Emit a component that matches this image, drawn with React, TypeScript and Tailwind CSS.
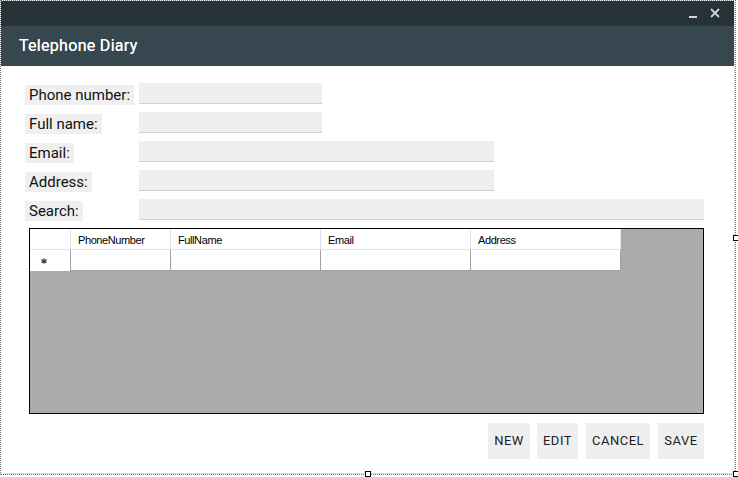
import React from "react";

const fields = [
  { label: "Phone number:", input: "w-[183px]" },
  { label: "Full name:", input: "w-[183px]" },
  { label: "Email:", input: "w-[355px]" },
  { label: "Address:", input: "w-[355px]" },
  { label: "Search:", input: "w-[565px]" },
];

const columns = [
  { name: "PhoneNumber", w: "w-[100px]" },
  { name: "FullName", w: "w-[150px]" },
  { name: "Email", w: "w-[150px]" },
  { name: "Address", w: "w-[150px]" },
];

const Handle = ({ className }: { className: string }) => (
  <div className={`absolute w-[6px] h-[6px] bg-white border border-black ${className}`} />
);

export default function App() {
  return (
    <div className="relative w-[738px] h-[477px] bg-white overflow-hidden font-['Roboto',sans-serif]">
      <div className="w-[736px] h-[475px] border border-dotted border-[#777]">
        <div className="flex flex-col h-full border-r border-b border-[#dcdcdc]">
          <div className="h-[25px] bg-[#263238] flex items-center justify-end pr-[14px] gap-[13px] text-[#cfd4d6]">
            <div className="w-[8px] h-[2px] bg-[#cfd4d6] mt-[6px]" />
            <svg width="10" height="10" viewBox="0 0 10 10" className="mt-[-1px]">
              <path d="M1 1L9 9M9 1L1 9" stroke="#cfd4d6" strokeWidth="1.8" />
            </svg>
          </div>
          <div className="h-[40px] bg-[#37474f] flex items-center pl-[18px]">
            <span className="text-white text-[16px] font-normal tracking-[0.3px] [text-shadow:0_0_0.5px_#fff]">
              Telephone Diary
            </span>
          </div>

          <div className="flex flex-col px-[24px] pt-[17px]">
            <div className="flex flex-col gap-[8px]">
              {fields.map((f) => (
                <div key={f.label} className="flex items-start h-[21px]">
                  <div className="w-[114px]">
                    <span className="inline-block h-[20px] leading-[20px] bg-[#efefef] px-[4px] text-[15px] text-[#111]">
                      {f.label}
                    </span>
                  </div>
                  <div className={`${f.input} h-[21px] bg-[#efefef] border-b border-[#d0d0d0]`} />
                </div>
              ))}
            </div>

            <div className="ml-[4px] mt-[8px] w-[675px] h-[186px] border border-black bg-[#ababab] font-['Liberation_Sans',sans-serif] text-[11px] text-black">
              <div className="flex">
                <div className="w-[41px] h-[21px] bg-white border-r border-b border-[#e2e2e2]" />
                {columns.map((c) => (
                  <div
                    key={c.name}
                    className={`${c.w} h-[21px] bg-white border-r border-b border-[#e2e2e2] pl-[7px] leading-[22px] tracking-[-0.4px]`}
                  >
                    {c.name}
                  </div>
                ))}
              </div>
              <div className="flex">
                <div className="w-[41px] h-[21px] bg-white border-r border-[#a0a0a0] flex items-center pl-[11px]">
                  <svg width="6" height="6" viewBox="0 0 6 6">
                    <path d="M3 0.2V5.8M0.4 1.6L5.6 4.4M5.6 1.6L0.4 4.4" stroke="#444" strokeWidth="1.2" />
                  </svg>
                </div>
                {columns.map((c) => (
                  <div key={c.name} className={`${c.w} h-[21px] bg-white border-r border-b border-[#a0a0a0]`} />
                ))}
              </div>
            </div>

            <div className="flex justify-end mt-[9px] pr-[6px] text-[13px] font-normal text-[#222] tracking-[0.5px]">
              <button className="w-[42px] h-[36px] bg-[#efefef]">NEW</button>
              <button className="w-[41px] h-[36px] ml-[7px] bg-[#efefef]">EDIT</button>
              <button className="w-[64px] h-[36px] ml-[8px] bg-[#efefef]">CANCEL</button>
              <button className="w-[46px] h-[36px] ml-[8px] bg-[#efefef]">SAVE</button>
            </div>
          </div>
        </div>
      </div>
      <Handle className="left-[733px] top-[235px]" />
      <Handle className="left-[365px] top-[471px]" />
      <Handle className="left-[733px] top-[471px]" />
    </div>
  );
}
